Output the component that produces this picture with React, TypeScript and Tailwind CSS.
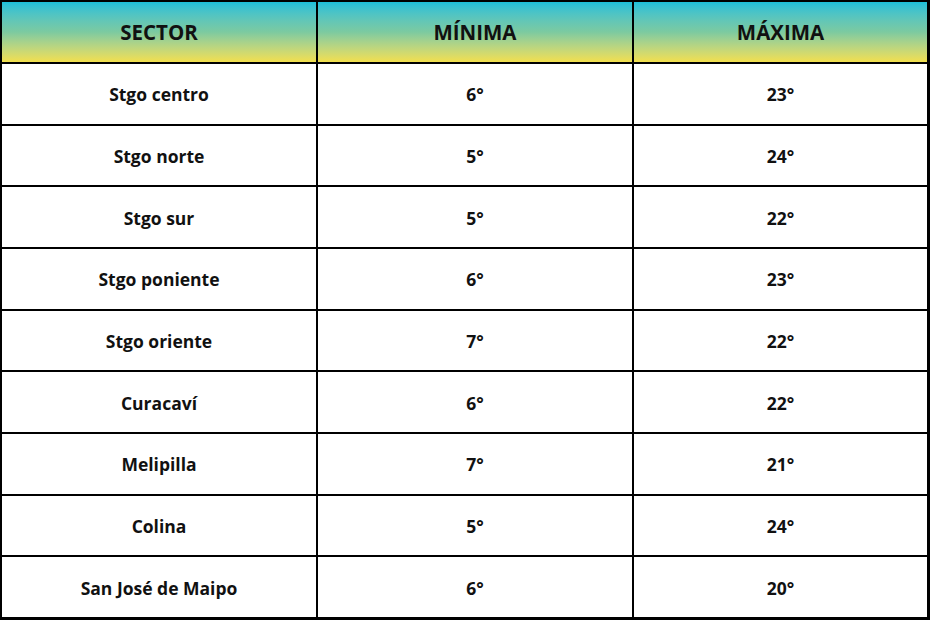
import React from "react";

const rows: [string, string, string][] = [
  ["Stgo centro", "6°", "23°"],
  ["Stgo norte", "5°", "24°"],
  ["Stgo sur", "5°", "22°"],
  ["Stgo poniente", "6°", "23°"],
  ["Stgo oriente", "7°", "22°"],
  ["Curacaví", "6°", "22°"],
  ["Melipilla", "7°", "21°"],
  ["Colina", "5°", "24°"],
  ["San José de Maipo", "6°", "20°"],
];

export default function App() {
  const hdr =
    "flex items-center justify-center pt-[1px] bg-gradient-to-b from-[#1bbfd9] via-[#7ccaa0] to-[#f2df4c] text-[20.5px] font-bold text-[#111]";
  const cell = "flex items-center justify-center pt-[1px] bg-white text-[17.5px] font-bold text-[#111]";
  return (
    <div
      className="w-[930px] h-[620px] bg-black pl-[2px] pt-[2px] pr-[3px] pb-[3px] grid grid-cols-[314px_314px_293px] grid-rows-[60px_repeat(9,1fr)] gap-[2px]"
      style={{ fontFamily: '"Open Sans", "Noto Sans", sans-serif' }}
    >
      <div className={hdr}>SECTOR</div>
      <div className={hdr}>MÍNIMA</div>
      <div className={hdr}>MÁXIMA</div>
      {rows.map((r) => (
        <React.Fragment key={r[0]}>
          <div className={cell}>{r[0]}</div>
          <div className={cell}>{r[1]}</div>
          <div className={cell}>{r[2]}</div>
        </React.Fragment>
      ))}
    </div>
  );
}
